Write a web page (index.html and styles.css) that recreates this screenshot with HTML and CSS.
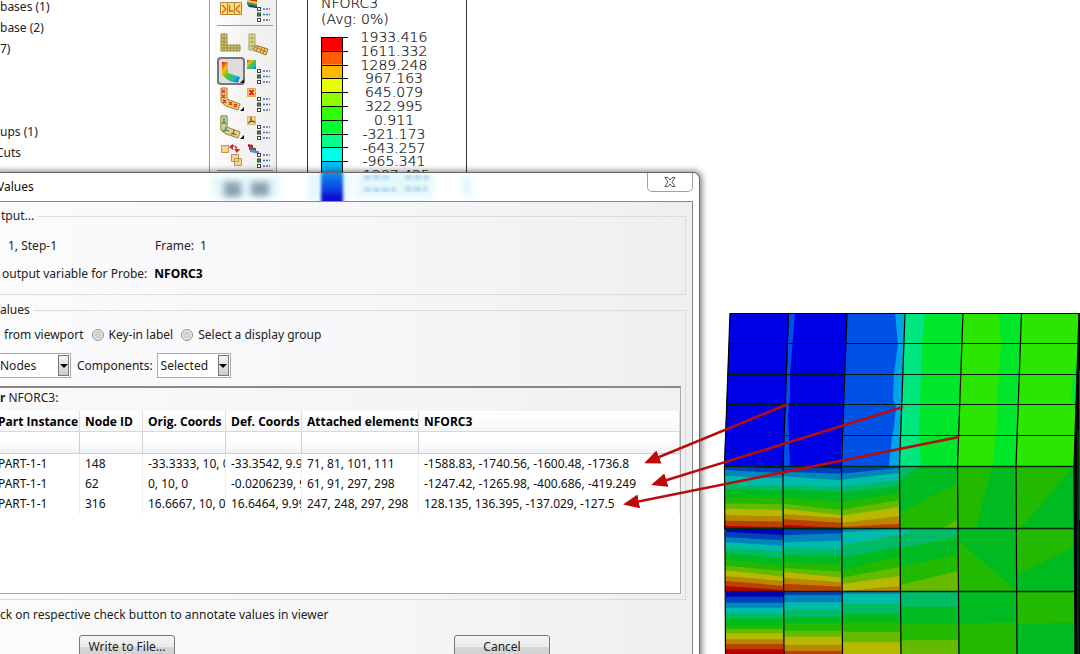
FILE: index.html
```html
<!DOCTYPE html>
<html lang="en">
<head>
<meta charset="utf-8">
<title>Probe Values</title>
<link rel="stylesheet" href="styles.css">
</head>
<body>
<svg class="defs" aria-hidden="true">
  <defs>
    <linearGradient id="spectrum" x1="0" y1="0" x2="1" y2="1">
      <stop offset="0" stop-color="#f0100c"/><stop offset=".25" stop-color="#f4c414"/><stop offset=".5" stop-color="#4cc42c"/><stop offset=".75" stop-color="#1cb8d0"/><stop offset="1" stop-color="#2848d8"/>
    </linearGradient>
    <symbol id="list" viewBox="0 0 28 28">
      <g fill="#fff" stroke="#444"><rect x="12.500" y="12.500" width="3" height="3"/><rect x="12.500" y="18" width="3" height="3" fill="#2a9a48"/><rect x="12.500" y="23.500" width="3" height="3"/></g>
      <path d="M18 14h7M18 19.500h7M18 25h7" stroke="#3b6fc0" stroke-width="1.500" stroke-dasharray="2 1"/>
    </symbol>
    <symbol id="bent" viewBox="0 0 28 28">
      <path d="M4 3h6v11l13 5-2 6-12-4-5-4z" fill="#f0cf70" stroke="#9b8340"/>
    </symbol>
    <symbol id="corner" viewBox="0 0 28 28"><path d="M27 22v4h-4z" fill="#111"/></symbol>
  </defs>
</svg>

<div class="app">
  <nav class="tree" aria-label="Results tree">
    <ul class="tree-group"><li>bases (1)</li><li>base (2)</li><li>7)</li></ul>
    <ul class="tree-group"><li>ups (1)</li><li class="tree-cut">Cuts</li></ul>
  </nav>

  <div class="toolbar" role="toolbar">
    <div class="tools tools-first">
      <button class="tool" aria-label="Common options"><svg viewBox="0 0 28 28"><path d="M3.500 7.500h21v12h-21z" fill="#ffdc74" stroke="#b08a3c"/><path d="M10.500 7v13M17.500 7v13" stroke="#b08a3c"/><path d="M5 10l4 4-4 4M12.500 10v6h4M23 10l-4 4 4 4" fill="none" stroke="#d8601c" stroke-width="1.300"/></svg></button>
      <button class="tool" aria-label="Superimpose options"><svg viewBox="0 0 28 28"><path d="M2 2l10 2v3L2 5z" fill="#e02818"/><path d="M2 5l10 2v2L2 7z" fill="#e8d020"/><path d="M2 7l10 2v2L2 9z" fill="#28a040"/><path d="M2 9l10 2v2l-8-1z" fill="#203a90"/><use href="#list"/></svg></button>
    </div>
    <div class="tools">
      <button class="tool" aria-label="Undeformed shape"><svg viewBox="0 0 28 28"><path d="M4 5h6v11h13v6H4z" fill="#d9cd72" stroke="#93883f"/><path d="M7 5v17M4 9h6M4 13h6M4 16h6M4 19h19M10 16v6M13.500 16v6M17 16v6M20 16v6" stroke="#93883f"/></svg></button>
      <button class="tool" aria-label="Deformed shape"><svg viewBox="0 0 28 28"><path d="M4 5h6v11l-1 5H4z" fill="#dfe29a" stroke="#a4a45a"/><path d="M10 16l13 4-2 6-13-5z" fill="#ecc766" stroke="#a0813c"/><path d="M7 5v15M4 9h6M4 13h6M4 17h5" stroke="#a4a45a"/><path d="M9 18l13 5M13 17l-2 6M17 18l-2 6M20 19l-2 6" stroke="#a0813c"/></svg></button>
      <button class="tool tool-on" aria-label="Contours" aria-pressed="true"><svg viewBox="0 0 28 28"><path d="M5 5h6v11l12 4-2 5.500c-5 0-8-1-12-4L5 18z" fill="url(#spectrum)"/><use href="#corner"/></svg></button>
      <button class="tool" aria-label="Contour options"><svg viewBox="0 0 28 28"><path d="M2 3h9v9H2z" fill="url(#spectrum)"/><use href="#list"/></svg></button>
      <button class="tool" aria-label="Symbols"><svg viewBox="0 0 28 28"><use href="#bent"/><path d="M5 5l3 3m0-3l-3 3M5 10l3 3m0-3l-3 3M6 15l3 3m0-3l-3 3M12 17l3 3m0-3l-3 3M17 19l3 3m0-3l-3 3" stroke="#d8301c" stroke-width="1.400"/><use href="#corner"/></svg></button>
      <button class="tool" aria-label="Symbol options"><svg viewBox="0 0 28 28"><path d="M2.500 3.500h8v8h-8z" fill="#ffc860" stroke="#e0a850"/><path d="M4.500 5l4 5m0-5l-4 5" stroke="#d02c10" stroke-width="2"/><use href="#list"/></svg></button>
      <button class="tool" aria-label="Material orientations"><svg viewBox="0 0 28 28"><use href="#bent"/><path d="M4 3h6v11l-3 4-3-1z" fill="#cfd384" stroke="#9b9a50"/><path d="M7 5v4l-2 2M7 9l2 2M9 14v3l-3 2M9 17l3 1M17 17l-1 4-2 0M16 20l3 2" fill="none" stroke="#2c84a0" stroke-width="1.300"/><use href="#corner"/></svg></button>
      <button class="tool" aria-label="Orientation options"><svg viewBox="0 0 28 28"><path d="M2.500 3.500h8v8h-8z" fill="#f6d27c" stroke="#e0b868"/><path d="M6 4v4l-3 2M6 8l4 1" fill="none" stroke="#5b6a50" stroke-width="1.500"/><use href="#list"/></svg></button>
      <button class="tool" aria-label="Animate"><svg viewBox="0 0 28 28"><g fill="#f9d68c" stroke="#b8935a"><path d="M4.500 4.500h7v7h-7zM14.500 13.500h7v7h-7zM17.500 17.500h7v7h-7z"/></g><path d="M14 5c4-1 6 1 6 5" fill="none" stroke="#d42424" stroke-width="1.800" stroke-dasharray="3 1"/><path d="M12 6l4-3v6zM17 8h6l-3 4z" fill="#d42424"/></svg></button>
      <button class="tool" aria-label="Animation options"><svg viewBox="0 0 28 28"><path d="M3 3l5 1v3l-5-1z" fill="#b82830"/><path d="M4 6l7 1v3l-7-1z" fill="#2f7a4a"/><path d="M5 9l9 1v3l-9-2z" fill="#8a78c8"/><use href="#list"/></svg></button>
    </div>
  </div>

  <main class="viewport">
    <section class="legend">
      <p class="legend-title">NFORC3</p>
      <p class="legend-title">(Avg: 0%)</p>
      <div class="scale">
        <svg class="scale-bar" viewBox="0 0 28 154" id="scale" aria-hidden="true"></svg>
        <ol class="scale-values">
          <li>1933.416</li><li>1611.332</li><li>1289.248</li><li>967.163</li><li>645.079</li><li>322.995</li><li>0.911</li><li>-321.173</li><li>-643.257</li><li>-965.341</li><li>-1287.425</li>
        </ol>
      </div>
    </section>
    <svg class="mesh" viewBox="720 300 360 354" id="mesh" role="img" aria-label="Contour plot"></svg>
  </main>
</div>

<section class="dialog" role="dialog" aria-labelledby="dialog-title">
  <header class="titlebar">
    <svg class="glass" viewBox="0 0 300 28" aria-hidden="true">
      <defs><filter id="soft" x="-20%" y="-50%" width="140%" height="200%"><feGaussianBlur stdDeviation="3"/></filter><filter id="fine"><feGaussianBlur stdDeviation="1.500"/></filter>
      <linearGradient id="bar" x1="0" y1="0" x2="0" y2="1"><stop offset="0" stop-color="#08a0f0"/><stop offset=".3" stop-color="#1068e8"/><stop offset=".6" stop-color="#0c3fe0"/><stop offset=".8" stop-color="#0808d0"/></linearGradient></defs>
      <g filter="url(#soft)" fill="#e4f8fc"><path d="M12 3h68v22H12zM108 0h42v28h-42zM156 0h78v25h-78zM262 2h10v22h-10z"/></g>
      <g filter="url(#soft)" fill="#8ba0b0"><path d="M24 9h17v15H24zM51 9h18v14H51z"/></g>
      <path d="M121 -3h22v34h-22z" fill="url(#bar)" filter="url(#fine)"/>
      <path d="M164 4h26M205 4h24M164 17h32M205 16h22" stroke="#7cb4d8" stroke-width="5" stroke-dasharray="7 2" opacity=".45" filter="url(#fine)"/>
    </svg>
    <h1 class="title" id="dialog-title">Values</h1>
    <button class="close" aria-label="Close"><svg viewBox="0 0 12 10"><path d="M1 .5h3l2 2.500 2-2.500h3L8 5l3 4.500H8L6 7 4 9.500H1L4 5z" fill="#fff" stroke="#555"/></svg></button>
  </header>
  <div class="client">
    <fieldset class="group group-output">
      <legend>tput...</legend>
      <div class="line line-step"><span>1, Step-1</span><span>Frame:&nbsp; 1</span></div>
      <div class="line line-variable"><span>output variable for Probe:</span><strong>NFORC3</strong></div>
    </fieldset>
    <fieldset class="group group-values">
      <legend class="legend-flush">alues</legend>
      <div class="line line-probe">
        <span>from viewport</span>
        <label class="option"><input type="radio" name="probe" class="radio">Key-in label</label>
        <label class="option"><input type="radio" name="probe" class="radio">Select a display group</label>
      </div>
      <div class="line line-combos">
        <span class="combo combo-nodes"><select aria-label="Probe"><option>Nodes</option></select><span class="arrow"></span></span>
        <label for="components">Components:</label>
        <span class="combo combo-components"><select id="components"><option>Selected</option></select><span class="arrow"></span></span>
      </div>
      <div class="panel">
        <p class="panel-title"><b>r</b> NFORC3:</p>
        <table class="values">
          <colgroup><col class="c-part"><col class="c-node"><col class="c-orig"><col class="c-def"><col class="c-elements"><col></colgroup>
          <thead>
            <tr><th>Part Instance</th><th>Node ID</th><th>Orig. Coords</th><th>Def. Coords</th><th>Attached elements</th><th>NFORC3</th></tr>
            <tr class="filter"><td></td><td></td><td></td><td></td><td></td><td></td></tr>
          </thead>
          <tbody>
            <tr><td>PART-1-1</td><td>148</td><td>-33.3333, 10, 0</td><td>-33.3542, 9.99</td><td>71, 81, 101, 111</td><td>-1588.83, -1740.56, -1600.48, -1736.8</td></tr>
            <tr><td>PART-1-1</td><td>62</td><td>0, 10, 0</td><td>-0.0206239, 9</td><td>61, 91, 297, 298</td><td>-1247.42, -1265.98, -400.686, -419.249</td></tr>
            <tr><td>PART-1-1</td><td>316</td><td>16.6667, 10, 0</td><td>16.6464, 9.99</td><td>247, 248, 297, 298</td><td>128.135, 136.395, -137.029, -127.5</td></tr>
          </tbody>
        </table>
      </div>
    </fieldset>
    <p class="hint">ck on respective check button to annotate values in viewer</p>
    <div class="actions"><button class="push">Write to File...</button><button class="push">Cancel</button></div>
  </div>
</section>

<svg class="callouts" viewBox="0 0 1080 654" aria-hidden="true">
  <defs><marker id="head" viewBox="0 0 16 14" refX="13" refY="7" markerWidth="16" markerHeight="14" markerUnits="userSpaceOnUse" orient="auto"><path d="M0 0l16 7-16 7z" fill="#c00808"/></marker></defs>
  <g stroke="#b80c10" stroke-width="2.500"><path d="M788 404L647 462" marker-end="url(#head)"/><path d="M903 407L654 484" marker-end="url(#head)"/><path d="M959 437L626 504" marker-end="url(#head)"/></g>
</svg>
<script src="script.js"></script>
</body>
</html>
```

FILE: styles.css
```css
* { box-sizing: border-box; }
html { overflow: hidden; }
body {
  margin: 0;
  height: 100vh;
  overflow: hidden;
  position: relative;
  background: #fff;
  color: #222;
  font: 12px/16px "Noto Sans", "Open Sans", sans-serif;
}
p, h1, ul, ol { margin: 0; padding: 0; list-style: none; }
button, select { font: inherit; color: inherit; }
svg { display: block; }
.defs { position: absolute; width: 0; height: 0; }

.app { display: flex; height: 100vh; overflow: hidden; }
.tree { flex: 0 0 209px; overflow: hidden; }
.tree-group { line-height: 21px; margin-top: -4px; }
.tree-group + .tree-group { margin-top: 62px; }
.tree-cut { margin-left: -4px; }

.toolbar {
  flex: 0 0 68px;
  padding: 0 3px 0 7px;
  border: solid #999;
  border-width: 0 1px;
  background: linear-gradient(90deg, #fff, #f4f3f2 50%, #efefee);
}
.tools {
  display: grid;
  grid-template-columns: 28px 28px;
  grid-auto-rows: 28px;
  padding-top: 3px;
  border-bottom: 1px solid #999;
  height: 145px;
}
.tools-first { height: 26px; padding: 0 0 2px; align-content: end; }
.tool { padding: 0; border: 0; background: none; }
.tool svg { width: 28px; height: 28px; }
.tool-on { border-radius: 4px; background: #ddd; box-shadow: inset 0 0 0 2px #777; }

.viewport { flex: 1; display: flex; justify-content: space-between; }
.legend {
  flex: 0 0 160px;
  margin-left: 30px;
  padding: 0 13px;
  border: solid #333;
  border-width: 0 1px;
  color: #000;
  font: 200 14px/16px "DejaVu Sans", sans-serif;
  -webkit-text-stroke: 0.2px #222;
}
.legend-title:first-child { margin-top: -5px; }
.scale { display: flex; margin-top: 4px; height: 152px; }
.scale-bar { flex: 0 0 28px; height: 154px; margin-top: 6px; }
.scale-values {
  flex: 0 0 90px;
  display: grid;
  grid-template-rows: repeat(11, 1fr);
  line-height: 13px;
  text-align: center;
}
.mesh { flex: 0 0 360px; height: 354px; margin-top: 300px; }

.dialog {
  position: absolute;
  left: -8px;
  right: 380px;
  top: 172px;
  padding: 0 6px 20px 0;
  border: 1px solid #666;
  border-radius: 7px;
  background: #fff;
  box-shadow: 1px 0 6px 1px rgba(0, 0, 0, .5);
}
.titlebar { display: flex; height: 28px; position: relative; overflow: hidden; }
.glass { position: absolute; left: 207px; top: 0; width: 300px; height: 28px; }
.title { flex: 1; padding: 6px 0 0 4px; font-size: 12px; font-weight: 400; color: #111; }
.close {
  display: grid;
  place-items: center;
  width: 46px;
  height: 19px;
  padding: 0;
  border: 1px solid #a0a0a4;
  border-top: 0;
  border-radius: 0 0 5px 5px;
  background: #fff;
}
.close svg { width: 12px; height: 10px; }

.client {
  padding: 6px 6px 20px 0;
  border: solid #888;
  border-width: 1px 1px 0 0;
  background: linear-gradient(90deg, #fbfbfc, #f7f6f8 50%, #efeef0);
}
.group {
  display: flex;
  flex-direction: column;
  min-width: 0;
  margin: 0;
  border: 1px solid #dcdbe0;
  border-left: 0;
}
.group legend { padding: 0 4px 0 8px; }
.group .legend-flush { padding-left: 7px; }
.group-output { gap: 12px; padding: 14px 0 12px; }
.group-values { margin-top: 7px; padding: 9px 4px 5px 0; }
.line { display: flex; align-items: center; }
.line-step { padding-left: 15px; }
.line-step span:first-child { flex: 0 0 147px; }
.line-variable { padding-left: 9px; gap: 7px; }
.line-variable strong { color: #000; }
.line-probe { padding-left: 11px; gap: 8px; }
.option { display: flex; align-items: center; gap: 5px; }
.radio {
  appearance: none;
  width: 12px;
  height: 12px;
  margin: 0;
  border: 1px solid #8e8f92;
  border-radius: 50%;
  background: radial-gradient(circle, #ddd, #ccc 40%, #fafafa 75%);
}
.line-combos { margin: 10px 0 8px; gap: 6px; }
.combo { position: relative; height: 25px; }
.combo-nodes { width: 78px; }
.combo-components { width: 74px; margin-left: -2px; }
.combo select {
  appearance: none;
  width: 100%;
  height: 100%;
  padding: 0 3px;
  border: 1px solid #aaa;
  border-radius: 0;
  background: #fff;
}
.combo-nodes select { padding-left: 6px; }
.arrow {
  position: absolute;
  right: 2px;
  top: 2px;
  bottom: 2px;
  width: 11px;
  display: grid;
  place-items: center;
  border: 1px solid #777;
  background: linear-gradient(#f4f4f4, #ccc);
  pointer-events: none;
}
.arrow::after { content: ""; border: solid transparent; border-width: 4px 4px 0; border-top-color: #000; }

.panel {
  height: 208px;
  border: solid #aaa;
  border-width: 2px 1px 1px 0;
  border-top-color: #888;
  background: #fff;
}
.panel-title { height: 23px; padding: 2px 7px; background: linear-gradient(90deg, #fafafb, #f1f0f2); }
.values { width: 100%; border-collapse: separate; border-spacing: 0; table-layout: fixed; color: #111; }
.c-part { width: 87px; }
.c-node { width: 63px; }
.c-orig { width: 83px; }
.c-def { width: 76px; }
.c-elements { width: 117px; }
.values th, .values td {
  height: 20px;
  padding: 0 0 0 5px;
  overflow: hidden;
  white-space: nowrap;
  text-align: left;
  text-overflow: clip;
  border-right: 1px solid #eeedf0;
}
.values th { height: 21px; padding-top: 2px; font-family: "Open Sans", sans-serif; color: #000; border-bottom: 1px solid #d8d8dc; border-right-color: #dcdce0; background: linear-gradient(#fff, #f8f8fa); }
.values .filter td { height: 22px; border-bottom: 1px solid #d0d0d4; border-right-color: #d0d0d4; background: linear-gradient(#fff 40%, #f1f2f4); }
.hint { padding: 7px 0 0 7px; }
.actions { display: flex; gap: 279px; padding: 12px 0 0 86px; }
.push {
  width: 96px;
  height: 24px;
  padding: 0;
  border: 1px solid #777;
  border-radius: 3px;
  background: linear-gradient(#f5f5f5, #eaeaea 48%, #d6d6d6 52%, #cfcfcf);
}
.callouts { position: absolute; left: 0; top: 0; width: 1080px; height: 654px; pointer-events: none; }
```

FILE: script.js
```js
const NS = "http://www.w3.org/2000/svg";

function shape(parent, points, fill) {
  const p = document.createElementNS(NS, "polygon");
  p.setAttribute("points", points.map(q => q.join(",")).join(" "));
  p.setAttribute("fill", fill);
  parent.append(p);
}

function stroke(parent, d, width, color) {
  const p = document.createElementNS(NS, "path");
  p.setAttribute("d", d);
  p.setAttribute("fill", "none");
  p.setAttribute("stroke", color || "#000");
  p.setAttribute("stroke-width", width);
  parent.append(p);
}

/* Legend colour bar */
const scale = document.getElementById("scale");
const legendColors = ["#ff0000", "#ff5d00", "#ffb900", "#e8ff00", "#8bff00", "#2eff00", "#00ff2e", "#00ff8b", "#00ffe8", "#00b9ff", "#005dff"];
legendColors.forEach((c, i) => {
  const y = i * 13.8;
  shape(scale, [[0, y], [22, y], [22, y + 14], [0, y + 14]], c);
});
legendColors.forEach((c, i) => stroke(scale, `M0 ${Math.round(i * 13.8) + 0.5}H27`, 1));
stroke(scale, "M.5 0V154M21.500 0V154", 1);

/* Upper face */
const mesh = document.getElementById("mesh");
const blue = "#0000e6", mid = "#0052e6", sky = "#00a5e6", mint = "#00e680", green = "#00e62a", lime = "#2ae600";
shape(mesh, [[730, 313], [847, 313], [841, 466], [724, 466]], blue);
shape(mesh, [[789, 313], [795, 313], [790, 374], [790, 397], [788, 415], [790, 466], [783, 466]], mid);
shape(mesh, [[847, 313], [905, 313], [899, 466], [841, 466]], mid);
shape(mesh, [[895, 313], [905, 313], [899, 466], [889, 466], [892, 437], [894, 427], [896, 407], [893, 400], [894, 374], [898, 344]], sky);
shape(mesh, [[905, 313], [1022, 313], [1016, 466], [899, 466]], green);
shape(mesh, [[905, 313], [925, 313], [922, 343], [921, 374], [919, 433], [921, 466], [899, 466]], mint);
shape(mesh, [[963, 313], [999, 313], [1001, 343], [997, 400], [998, 410], [993, 466], [957, 466]], lime);
shape(mesh, [[1022, 313], [1079, 313], [1074, 466], [1016, 466]], lime);
shape(mesh, [[1078, 360], [1073, 374], [1071, 400], [1076, 405]], green);

/* Lower face: band edges per cell as [colour index, left y, right y] */
const dark = ["#0000ba", "#0042ba", "#0086ba", "#00baaa", "#00ba65", "#00ba21", "#21ba00", "#65ba00", "#b8b800", "#ba8600", "#ba4200", "#ba0000"];
const px = x => 710 + x / 3, py = y => 455 + y / 3;
function cell(left, right, top, bottom, bands) {
  for (const [c, l, r] of bands)
    shape(mesh, [[px(left), py(l)], [px(right), py(r)], [px(right), py(bottom)], [px(left), py(bottom)]], dark[c]);
}
const A = [33, 222], B = [221, 411], C = [410, 600];
cell(43, 219, ...A, [[0,33,33],[1,34,40],[2,44,55],[3,62,70],[4,87,92],[5,103,106],[6,127,130],[7,145,148],[8,161,165],[9,180,184],[10,197,200],[11,212,217]]);
cell(218, 394, ...A, [[0,33,33],[1,33,41],[2,50,56],[3,64,76],[4,90,97],[5,103,112],[6,127,140],[7,146,165],[8,161,180],[9,177,190],[10,192,203],[11,209,219]]);
cell(393, 569, ...A, [[1,33,33],[2,56,38],[3,74,53],[4,96,74],[5,115,92],[6,142,115],[7,165,135],[8,182,156],[9,203,184],[10,216,206]]);
cell(46, 220, ...B, [[0,222,222],[1,230,240],[2,247,256],[3,262,272],[4,277,290],[5,295,309],[6,315,330],[7,332,348],[8,346,365],[9,363,378],[10,378,392],[11,393,405]]);
cell(220, 395, ...B, [[0,222,222],[1,223,224],[2,241,235],[3,262,257],[4,280,282],[5,300,302],[6,322,328],[7,339,350],[8,351,368],[9,368,382],[10,386,395]]);
cell(395, 570, ...B, [[2,222,222],[3,231,223],[4,271,239],[5,308,275],[6,345,302],[7,368,336],[8,387,363],[9,409,393]]);
cell(47, 221, ...C, [[0,410,410],[1,425,425],[2,443,443],[3,458,458],[4,475,475],[5,490,490],[6,512,512],[7,522,522],[8,535,535],[9,553,553],[10,567,567],[11,583,583]]);
cell(221, 397, ...C, [[1,410,410],[2,420,420],[3,442,442],[4,465,465],[5,485,485],[6,506,506],[7,527,527],[8,545,545],[9,569,569],[10,588,588]]);
cell(397, 571, ...C, [[2,410,410],[3,416,416],[4,447,447],[5,477,477],[6,502,502],[7,530,530],[8,562,562]]);
cell(568, 743, ...A, [[5,33,33],[6,175,85]]);
cell(569, 744, ...B, [[4,221,221],[5,280,247],[6,335,297],[7,390,348]]);
cell(571, 746, ...C, [[4,410,410],[5,455,455],[6,506,506],[7,556,556]]);
cell(743, 918, ...A, [[5,33,33]]);
cell(744, 919, ...B, [[5,221,221],[6,255,407]]);
cell(746, 921, ...C, [[5,410,410],[6,507,501]]);
cell(918, 1093, ...A, [[5,33,33]]);
cell(919, 1094, ...B, [[6,221,221],[5,360,275]]);
cell(921, 1096, ...C, [[6,410,410],[5,508,502]]);
shape(mesh, [[900, 466], [919, 466], [900, 480]], dark[4]);
shape(mesh, [[942, 528], [957, 520], [957, 528]], dark[7]);
shape(mesh, [[958, 466], [992, 466], [976, 528], [958, 528]], dark[6]);
shape(mesh, [[1016, 466], [1074, 466], [1021, 528], [1016, 528]], dark[6]);
shape(mesh, [[900, 530], [909, 530], [900, 538]], dark[3]);

/* Side face seen edge-on */
shape(mesh, [[1079, 313], [1080, 313], [1080, 654], [1075, 654], [1074, 466]], "#000");
stroke(mesh, "M1078 430V654M1079.500 370V520", 1, "#0a5a18");

/* Element edges */
[343.5, 374.5, 404.5, 435.5].forEach((y, i) => stroke(mesh, `M${729 - i} ${y}H${1078 - i}`, 1.2, "#001a10"));
stroke(mesh, "M730 313.500H1080", 1);
stroke(mesh, "M724 466.500H1075M724 528.500H1075M725 591.500H1075", 1.4, "#002a10");
[[730, 724.5, 725.5], [788.5, 783, 784], [847, 841.5, 842.5], [905, 899.5, 901], [963, 957.5, 959], [1021.5, 1016, 1017], [1079, 1074, 1075]]
  .forEach(([a, b, c]) => stroke(mesh, `M${a} 313L${b} 466L${c} 654`, 1.2));
```
